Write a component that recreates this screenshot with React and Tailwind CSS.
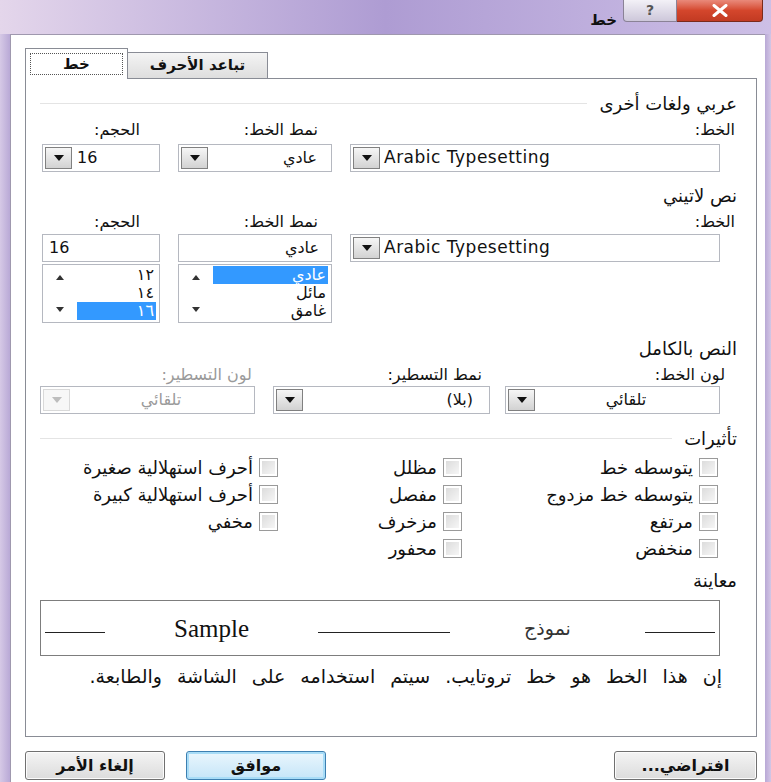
import React from 'react';

// Windows 7 style "Font" dialog, Arabic UI

function DropBtn({ disabled }) {
  return (
    <div
      className={`flex h-full w-[27px] shrink-0 items-center justify-center border ${
        disabled ? 'border-[#d9d9d9] bg-[#f7f7f7]' : 'border-[#808080] bg-linear-to-b from-[#f6f6f6] to-[#d2d2d2]'
      }`}
    >
      <svg width="10" height="6" viewBox="0 0 10 6">
        <path d="M0 0h10L5 6z" fill={disabled ? '#bdbdbd' : '#111'} />
      </svg>
    </div>
  );
}

function Combo({ className, children, disabled, textClass }) {
  return (
    <div className={`flex h-[28px] shrink-0 border border-[#b5b8c0] bg-white p-[2px] ${className}`}>
      <DropBtn disabled={disabled} />
      <div className={`flex flex-1 items-center ${textClass}`}>{children}</div>
    </div>
  );
}

function Arrow({ up }) {
  return (
    <svg width="8" height="5" viewBox="0 0 8 5">
      <path d={up ? 'M0 5h8L4 0z' : 'M0 0h8L4 5z'} fill="#333" />
    </svg>
  );
}

function ListBox({ items, selected }) {
  return (
    <div className="mt-[2px] flex h-[59px] border border-[#b5b8c0] bg-white">
      <div className="flex w-[34px] flex-col items-center justify-between py-[10px]">
        <Arrow up />
        <Arrow />
      </div>
      <div className="flex flex-1 flex-col pt-[1px] pr-[3px]">
        {items.map((it, i) => (
          <div
            key={i}
            dir="rtl"
            className={`flex h-[18px] items-center pr-[2px] text-[16px] ${i === selected ? 'bg-[#3399ff] text-white' : ''}`}
          >
            {it}
          </div>
        ))}
      </div>
    </div>
  );
}

function Header({ children, line }) {
  return (
    <div className="flex h-[20px] items-center pr-[19px] pl-[14px]">
      {line ? <div className="mr-[12px] h-px flex-1 bg-[#e4e4e4]" /> : <div className="flex-1" />}
      <span dir="rtl" className="text-[18px]">
        {children}
      </span>
    </div>
  );
}

function Check({ label }) {
  return (
    <div className="flex items-center justify-end gap-[6px]">
      <span dir="rtl" className="text-[18px]">
        {label}
      </span>
      <div className="h-[19px] w-[19px] border border-[#9a9a9a] bg-white p-[2px]">
        <div className="h-full w-full bg-linear-to-br from-[#dcdcdc] to-[#f6f6f6]" />
      </div>
    </div>
  );
}

function Button({ children, primary, className }) {
  return (
    <div
      className={`flex h-[29px] items-center justify-center rounded-[3px] border ${
        primary
          ? 'border-[#3c7fb1] bg-linear-to-b from-[#eaf6fd] to-[#c5e5f8] shadow-[inset_0_0_0_2px_#a7dcf7]'
          : 'border-[#707070] bg-linear-to-b from-[#f4f4f4] to-[#dcdcdc] shadow-[inset_0_0_0_1px_#fcfcfc]'
      } ${className}`}
    >
      <span dir="rtl" className="text-[16px] font-bold">
        {children}
      </span>
    </div>
  );
}

const effects = [
  ['أحرف استهلالية صغيرة', 'مظلل', 'يتوسطه خط'],
  ['أحرف استهلالية كبيرة', 'مفصل', 'يتوسطه خط مزدوج'],
  ['مخفي', 'مزخرف', 'مرتفع'],
  [null, 'محفور', 'منخفض'],
];

function LabelRow({ size }) {
  return (
    <div dir="rtl" className="mt-[9px] flex h-[16px] items-center text-[16px]">
      <div className="w-[385px] pr-[21px] text-right">الخط:</div>
      <div className="w-[172px] pr-[53px] text-right">نمط الخط:</div>
      <div className="w-[136px] pr-[59px] text-right">{size}</div>
    </div>
  );
}

export default function App() {
  return (
    <div className="flex h-[782px] w-[771px] flex-col overflow-hidden bg-[#cbbde0] font-['DejaVu_Sans',sans-serif] text-[#111]">
      {/* title bar */}
      <div className="flex h-[34px] shrink-0 items-start justify-end bg-linear-to-r from-[#e4d6eb] via-[#ae9cd3] to-[#cdbfe6] pr-[8px]">
        <span dir="rtl" className="mt-[9px] mr-[6px] text-[15px] font-bold">
          خط
        </span>
        <div className="flex h-[22px] w-[54px] items-center justify-center rounded-bl-[4px] border border-t-0 border-[#8a8296] bg-linear-to-b from-[#f3f1f7] to-[#cdc7da] text-[14px] font-bold text-[#555]">
          ?
        </div>
        <div className="flex h-[22px] w-[86px] items-center justify-center rounded-br-[4px] border border-t-0 border-l-0 border-[#7a2a1c] bg-linear-to-b from-[#e9897a] via-[#d4462c] to-[#c23a22]">
          <svg width="16" height="13" viewBox="0 0 16 13">
            <path d="M2 1.5l12 10M14 1.5l-12 10" stroke="#fff" strokeWidth="3" strokeLinecap="round" />
          </svg>
        </div>
      </div>

      <div className="flex flex-1">
        <div className="w-[10px] shrink-0 bg-linear-to-r from-[#d6c9e6] to-[#b9a9d6]" />

        {/* client area */}
        <div className="flex flex-1 flex-col border-t border-l border-[#9f98ae] bg-white pt-[13px] pr-[8px] pl-[14px]">
          {/* tabs */}
          <div className="flex h-[30px] items-end">
            <div className="relative z-10 -mb-px flex h-[31px] w-[103px] items-center justify-center border border-b-0 border-[#898c95] bg-white px-[4px] pt-[4px] pb-[4px]">
              <div className="flex h-full w-full items-center justify-center border border-dotted border-[#555]">
                <span dir="rtl" className="text-[15px] font-bold">
                  خط
                </span>
              </div>
            </div>
            <div className="flex h-[26px] w-[140px] items-center justify-center border border-b-0 border-l-0 border-[#898c95] bg-linear-to-b from-[#f4f4f4] to-[#dedede]">
              <span dir="rtl" className="text-[15px] font-bold">
                تباعد الأحرف
              </span>
            </div>
          </div>

          {/* tab page */}
          <div className="flex h-[659px] flex-col border border-[#898c95] bg-white pt-[14px]">
            <Header line>عربي ولغات أخرى</Header>

            <LabelRow size="الحجم:" />

            <div className="mt-[6px] flex gap-[18px] pl-[16px]">
              <Combo className="w-[118px]" textClass="pl-[5px] text-[16px]">
                16
              </Combo>
              <Combo className="w-[154px]" textClass="justify-end pr-[12px] text-[16px]">
                <span dir="rtl">عادي</span>
              </Combo>
              <Combo className="w-[370px]" textClass="pl-[4px] text-[17px] tracking-[0.5px]">
                Arabic Typesetting
              </Combo>
            </div>

            <div className="mt-[13px]">
              <Header>نص لاتيني</Header>
            </div>

            <LabelRow size="الحجم:" />

            <div className="mt-[4px] flex items-start gap-[18px] pl-[16px]">
              <div className="flex w-[118px] flex-col">
                <div className="flex h-[28px] items-center border border-[#b5b8c0] bg-white pl-[6px] text-[16px]">16</div>
                <ListBox items={['١٢', '١٤', '١٦']} selected={2} />
              </div>
              <div className="flex w-[154px] flex-col">
                <div dir="rtl" className="flex h-[28px] items-center border border-[#b5b8c0] bg-white pr-[12px] text-[16px]">
                  عادي
                </div>
                <ListBox items={['عادي', 'مائل', 'غامق']} selected={0} />
              </div>
              <Combo className="w-[370px]" textClass="pl-[4px] text-[17px] tracking-[0.5px]">
                Arabic Typesetting
              </Combo>
            </div>

            <div className="mt-[15px]">
              <Header>النص بالكامل</Header>
            </div>

            <div dir="rtl" className="mt-[9px] flex h-[16px] items-center text-[16px]">
              <div className="w-[250px] pr-[31px] text-right">لون الخط:</div>
              <div className="w-[233px] pr-[24px] text-right">نمط التسطير:</div>
              <div className="w-[233px] pr-[21px] text-right text-[#9a9a9a]">لون التسطير:</div>
            </div>

            <div className="mt-[3px] flex pl-[14px]">
              <Combo className="w-[215px]" disabled textClass="justify-center text-[16px] text-[#9a9a9a]">
                <span dir="rtl">تلقائي</span>
              </Combo>
              <Combo className="ml-[18px] w-[217px]" textClass="justify-end pr-[14px] text-[16px]">
                <span dir="rtl">(بلا)</span>
              </Combo>
              <Combo className="ml-[15px] w-[215px]" textClass="justify-center text-[16px]">
                <span dir="rtl">تلقائي</span>
              </Combo>
            </div>

            <div className="mt-[14px]">
              <Header line>تأثيرات</Header>
            </div>

            <div className="mt-[6px] flex flex-col pl-[14px]">
              {effects.map((row, r) => (
                <div key={r} className="flex h-[27px] items-center">
                  <div className="flex w-[238px] justify-end">{row[0] && <Check label={row[0]} />}</div>
                  <div className="flex w-[184px] justify-end">
                    <Check label={row[1]} />
                  </div>
                  <div className="flex w-[256px] justify-end">
                    <Check label={row[2]} />
                  </div>
                </div>
              ))}
            </div>

            <div className="mt-[8px]">
              <Header>معاينة</Header>
            </div>

            {/* preview */}
            <div className="mt-[10px] ml-[14px] flex h-[56px] w-[680px] items-center border border-[#7d7d7d] bg-white">
              <div className="mt-[8px] ml-[4px] h-px w-[60px] bg-[#222]" />
              <div className="flex w-[213px] justify-center font-['Liberation_Serif',serif] text-[25px] leading-none">
                Sample
              </div>
              <div className="mt-[8px] h-px w-[132px] bg-[#222]" />
              <div dir="rtl" className="flex w-[195px] justify-center text-[19px] leading-none text-[#333]">
                نموذج
              </div>
              <div className="mt-[8px] h-px w-[70px] bg-[#222]" />
            </div>

            <div dir="rtl" className="mt-[12px] flex h-[16px] items-center pr-[34px] text-[19px] [word-spacing:9px]">
              إن هذا الخط هو خط تروتايب. سيتم استخدامه على الشاشة والطابعة.
            </div>
          </div>

          {/* dialog buttons */}
          <div className="mt-[14px] flex">
            <Button className="w-[140px]">إلغاء الأمر</Button>
            <Button primary className="ml-[21px] w-[140px]">
              موافق
            </Button>
            <Button className="ml-[288px] w-[143px]">افتراضي...</Button>
          </div>
        </div>

        <div className="w-[6px] shrink-0 bg-linear-to-r from-[#b9a9d6] to-[#d3c6e5]" />
      </div>
    </div>
  );
}
